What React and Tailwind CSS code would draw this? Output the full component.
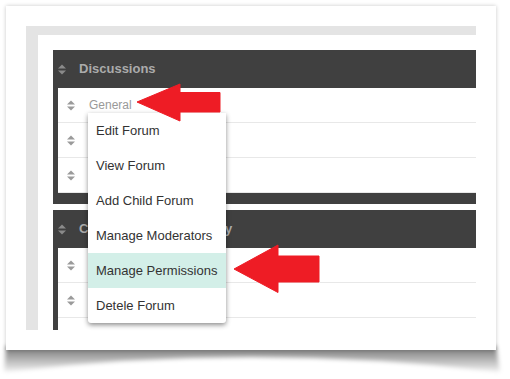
import React from 'react';

const SortIcon = ({ color = '#999' }) => (
  <svg width="8" height="11" viewBox="0 0 8 11" className="shrink-0">
    <path d="M0 4.5 L4 0.5 L8 4.5 Z" fill={color} />
    <path d="M0 6.5 L8 6.5 L4 10.5 Z" fill={color} />
  </svg>
);

const Panel = ({ title, rows, className = '' }) => (
  <div className={`bg-[#404040] pl-[5px] pb-[11px] ${className}`}>
    <div className="h-[38px] flex items-center">
      <SortIcon color="#8a8a8a" />
      <span className="ml-[13px] text-[13px] font-bold text-[#ababab]">{title}</span>
    </div>
    {rows.map((r, i) => (
      <div key={i} className="h-[35px] bg-white border-b border-[#e8e8e8] flex items-center pl-[9px]">
        <SortIcon color="#9a9a9a" />
        <span className="ml-[14px] text-[12px] text-[#999]">{r}</span>
      </div>
    ))}
  </div>
);

const menuItems = [
  'Edit Forum',
  'View Forum',
  'Add Child Forum',
  'Manage Moderators',
  'Manage Permissions',
  'Detele Forum',
];

const Arrow = ({ points }) => (
  <polygon points={points} fill="#ee1c25" stroke="#ee1c25" strokeWidth="1" strokeLinejoin="round" />
);

export default function App() {
  return (
    <div className="relative w-[510px] h-[379px] bg-white overflow-hidden font-['Liberation_Sans',Arial,sans-serif]">
      {/* curled page shadow */}
      <svg className="absolute left-0 top-0" width="510" height="379">
        <defs>
          <linearGradient id="curl" x1="0" y1="0" x2="0" y2="1">
            <stop offset="0" stopColor="#000" stopOpacity="0.55" />
            <stop offset="1" stopColor="#000" stopOpacity="0.05" />
          </linearGradient>
          <filter id="blur" x="-5%" y="-50%" width="110%" height="200%">
            <feGaussianBlur stdDeviation="2" />
          </filter>
        </defs>
        <path d="M6 346 L496 346 L500 372 Q250 342 4 372 Z" fill="url(#curl)" filter="url(#blur)" />
      </svg>

      {/* card */}
      <div className="relative ml-[6px] mt-[6px] w-[490px] h-[344px] bg-white shadow-[0_0_4px_rgba(0,0,0,0.22)] pt-[20px] px-[20px]">
        <div className="h-[304px] border-t-[9px] border-l-[12px] border-[#e4e4e4] bg-white pt-[15px] pl-[15px] overflow-hidden">
          <Panel title="Discussions" rows={['General', 'Announcements', 'Feedback']} />
          <Panel className="mt-[6px]" title="Community and Industry" rows={['Events', 'News', 'Related']} />
        </div>
      </div>

      {/* dropdown menu */}
      <div className="absolute left-[88px] top-[113px] w-[138px] bg-white rounded-b-[3px] shadow-[0_2px_5px_rgba(0,0,0,0.45)]">
        {menuItems.map((m) => (
          <div
            key={m}
            className={`h-[35px] flex items-center pl-[8px] text-[13px] text-[#333] ${
              m === 'Manage Permissions' ? 'bg-[#d3efe8]' : ''
            }`}
          >
            {m}
          </div>
        ))}
      </div>

      {/* red arrows */}
      <svg className="absolute left-0 top-0 pointer-events-none" width="510" height="379">
        <Arrow points="137,102 180,84 180,92.5 220,92.5 220,112 180,112 180,121" />
        <Arrow points="234,269 278,245 278,256 319,256 319,282 278,282 278,292.5" />
      </svg>
    </div>
  );
}
